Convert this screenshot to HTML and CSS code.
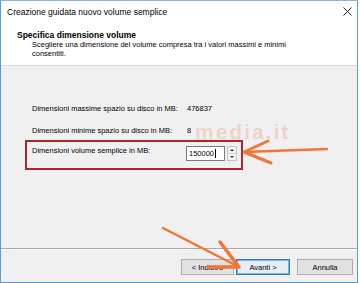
FILE: index.html
```html
<!DOCTYPE html>
<html lang="it">
<head>
<meta charset="utf-8">
<title>Creazione guidata nuovo volume semplice</title>
<link rel="stylesheet" href="styles.css">
</head>
<body>
<div class="window">
  <div class="titlebar">
    <span class="title">Creazione guidata nuovo volume semplice</span>
    <svg class="close" width="9" height="9" viewBox="0 0 9 9"><path d="M0.5 0.5 L8.5 8.5 M8.5 0.5 L0.5 8.5" stroke="#222" stroke-width="1" fill="none"/></svg>
  </div>
  <div class="header">
    <div class="h-title">Specifica dimensione volume</div>
    <div class="h-desc">Scegliere una dimensione del volume compresa tra i valori massimi e minimi<br>consentiti.</div>
  </div>
  <div class="content">
    <div class="row"><span class="label">Dimensioni massime spazio su disco in MB:</span><span class="value">476837</span></div>
    <div class="row row2"><span class="label">Dimensioni minime spazio su disco in MB:</span><span class="value">8</span></div>
    <div class="watermark">media.it</div>
    <div class="highlight">
      <span class="label">Dimensioni volume semplice in MB:</span>
      <div class="spin">
        <div class="input">150000<span class="caret"></span></div>
        <div class="spin-btns"><span class="up"></span><span class="down"></span></div>
      </div>
    </div>
  </div>
  <div class="footer">
    <button class="btn b1">&lt; Indietro</button>
    <button class="btn b2 primary">Avanti &gt;</button>
    <button class="btn b3">Annulla</button>
  </div>
  <svg class="arrows" width="358" height="283" viewBox="0 0 358 283">
    <g stroke="#f07536" fill="none" stroke-linecap="round" stroke-linejoin="round">
      <path d="M327 149 L244 152" stroke-width="2.5"/>
      <path d="M268 141 L244 152 L271 163" stroke-width="3"/>
      <path d="M163 228 L239 267" stroke-width="2.5"/>
      <path d="M220 242 L239 267 L208 267" stroke-width="3.5"/>
    </g>
  </svg>
</div>
</body>
</html>
```
FILE: styles.css
```css
body {
  margin: 0;
  background: #ffffff;
  font-family: "Liberation Sans", Arial, sans-serif;
  color: #000;
}

.window {
  position: relative;
  width: 358px;
  height: 283px;
  box-sizing: border-box;
  border: 1px solid #5b9bd3;
  border-top-color: #8ab6dc;
  background: #f0f0f0;
  display: flex;
  flex-direction: column;
  overflow: hidden;
}

.titlebar {
  height: 21px;
  flex: none;
  background: #fff;
  display: flex;
  align-items: center;
  justify-content: space-between;
  padding: 1px 5px 0 6px;
  box-sizing: border-box;
  font-size: 8.5px;
}

.close {
  display: block;
  margin-top: -1px;
}

.header {
  flex: none;
  height: 44px;
  box-sizing: border-box;
  background: #fff;
  border-bottom: 1px solid #dadada;
  padding: 8px 0 0 16px;
}

.h-title {
  font-weight: bold;
  font-size: 8.5px;
  line-height: 10px;
}

.h-desc {
  font-size: 7.5px;
  line-height: 9px;
  padding-left: 15px;
}

.content {
  flex: 1;
  position: relative;
  padding-top: 38px;
  font-size: 7.5px;
}

.row {
  display: flex;
  padding-left: 31px;
  line-height: 10px;
}

.row2 {
  margin-top: 12px;
}

.row .label {
  width: 155px;
}

.watermark {
  position: absolute;
  left: 194px;
  top: 58px;
  font-size: 21px;
  line-height: 16px;
  font-weight: bold;
  letter-spacing: 2px;
  color: rgba(238, 100, 70, 0.22);
  pointer-events: none;
}

.highlight {
  margin: 4px 0 0 24px;
  width: 218px;
  box-sizing: border-box;
  border: 2px solid #b0252a;
  padding: 4px 0 7px 5px;
  display: flex;
  align-items: flex-start;
  line-height: 10px;
  position: relative;
}

.highlight .label {
  width: 154px;
}

.spin {
  display: flex;
  gap: 2px;
}

.input {
  width: 39px;
  height: 15px;
  box-sizing: border-box;
  border: 1px solid #7a7a7a;
  background: #fff;
  padding-left: 2px;
  line-height: 13px;
  display: flex;
  align-items: center;
}

.caret {
  display: inline-block;
  width: 1px;
  height: 9px;
  background: #000;
  margin-left: 1px;
}

.spin-btns {
  width: 10px;
  height: 15px;
  box-sizing: border-box;
  border: 1px solid #c4c4c4;
  background: #f3f3f3;
  display: flex;
  flex-direction: column;
}

.spin-btns span {
  flex: 1;
  display: flex;
  align-items: center;
  justify-content: center;
}

.spin-btns .up {
  border-bottom: 1px solid #d8d8d8;
}

.spin-btns .up::after {
  content: "";
  border-left: 2px solid transparent;
  border-right: 2px solid transparent;
  border-bottom: 2px solid #333;
}

.spin-btns .down::after {
  content: "";
  border-left: 2px solid transparent;
  border-right: 2px solid transparent;
  border-top: 2px solid #333;
}

.footer {
  flex: none;
  height: 34px;
  box-sizing: border-box;
  border-top: 1px solid #a8a8a8;
  box-shadow: inset 0 1px 0 #ffffff;
  padding: 10px 4px 0 0;
  display: flex;
  justify-content: flex-end;
  align-items: flex-start;
}

.btn {
  height: 16px;
  box-sizing: border-box;
  border: 1px solid #adadad;
  background: #e1e1e1;
  font-family: "Liberation Sans", Arial, sans-serif;
  font-size: 7.5px;
  color: #000;
  padding: 0;
  margin: 0;
}

.b1 { width: 53px; }
.b2 { width: 54px; margin-left: 2px; }
.b3 { width: 56px; margin-left: 7px; }

.primary {
  border: 1px solid #2b7bbd;
  box-shadow: inset 0 0 0 1px #7fb4de;
  background: #e5eef5;
}

.arrows {
  position: absolute;
  left: -1px;
  top: -1px;
  pointer-events: none;
}
```
